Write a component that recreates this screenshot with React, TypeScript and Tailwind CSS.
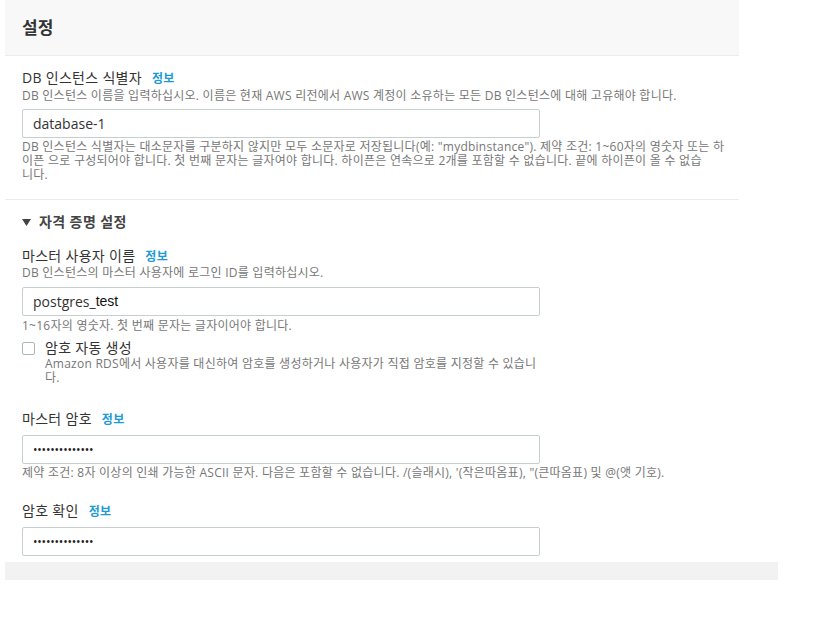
const font = "font-['Open_Sans','Noto_Sans_CJK_KR',sans-serif]";

function Info() {
  return <span className="ml-[10px] text-[12px] font-bold text-[#1c9ad6]">정보</span>;
}

function Field({ value, mono }: { value: React.ReactNode; mono?: boolean }) {
  return (
    <div
      className={`w-[518px] h-[29px] border border-[#c6cfd0] rounded-[2px] bg-white flex items-center px-[10px] ${
        mono ? "text-[12px] tracking-[-0.2px] text-[#222]" : "text-[14px] text-[#333]"
      }`}
    >
      {value}
    </div>
  );
}

const label = "flex items-baseline text-[14px] tracking-[0.3px] leading-[18px] text-[#333]";
const desc = "text-[12px] tracking-[0.25px] leading-[14px] text-[#777]";

export default function App() {
  const dots = "••••••••••••••";
  return (
    <div className={`w-[837px] h-[617px] bg-white ${font}`}>
      <div className="ml-[5px] w-[734px]">
        <div className="h-[56px] bg-[#f8f8f8] border-b border-[#eaeded] flex items-center pl-[17px]">
          <h2 className="text-[17px] font-bold text-[#333]">설정</h2>
        </div>

        <div className="px-[17px] pt-[13px] pb-[17px] border-b border-[#eaeded]">
          <div className={label}>
            DB 인스턴스 식별자 <Info />
          </div>
          <p className={`mt-[1px] ${desc}`}>
            DB 인스턴스 이름을 입력하십시오. 이름은 현재 AWS 리전에서 AWS 계정이 소유하는 모든 DB 인스턴스에 대해 고유해야 합니다.
          </p>
          <div className="mt-[6px]">
            <Field value="database-1" />
          </div>
          <div className={`mt-[2px] whitespace-nowrap ${desc}`}>
            <p>DB 인스턴스 식별자는 대소문자를 구분하지 않지만 모두 소문자로 저장됩니다(예: "mydbinstance"). 제약 조건: 1~60자의 영숫자 또는 하</p>
            <p>이픈 으로 구성되어야 합니다. 첫 번째 문자는 글자여야 합니다. 하이픈은 연속으로 2개를 포함할 수 없습니다. 끝에 하이픈이 올 수 없습</p>
            <p>니다.</p>
          </div>
        </div>

        <div className="px-[17px] pt-[12px]">
          <div className="flex items-center gap-[8px] text-[14px] tracking-[0.4px] leading-[20px] font-semibold text-[#444]">
            <svg width="9" height="7" viewBox="0 0 9 7">
              <path d="M0 0 H9 L4.5 7 Z" fill="#444" />
            </svg>
            자격 증명 설정
          </div>

          <div className={`mt-[15px] ${label}`}>
            마스터 사용자 이름 <Info />
          </div>
          <p className={desc}>DB 인스턴스의 마스터 사용자에 로그인 ID를 입력하십시오.</p>
          <div className="mt-[7px]">
            <Field
              value={
                <>
                  postgres_<span className="font-['Liberation_Sans',sans-serif] text-[#111]">test</span>
                </>
              }
            />
          </div>
          <p className={`mt-[3px] ${desc}`}>1~16자의 영숫자. 첫 번째 문자는 글자이어야 합니다.</p>

          <div className="mt-[6px] flex gap-[10px]">
            <div className="mt-[3px] w-[13px] h-[13px] border border-[#aab7b8] rounded-[2px] bg-white shrink-0" />
            <div>
              <div className="text-[14px] tracking-[0.3px] leading-[18px] text-[#333]">암호 자동 생성</div>
              <div className={`whitespace-nowrap ${desc} leading-[13px]`}>
                <p>Amazon RDS에서 사용자를 대신하여 암호를 생성하거나 사용자가 직접 암호를 지정할 수 있습니</p>
                <p>다.</p>
              </div>
            </div>
          </div>

          <div className={`mt-[25px] ${label}`}>
            마스터 암호 <Info />
          </div>
          <div className="mt-[6px]">
            <Field value={dots} mono />
          </div>
          <p className={`mt-[2px] ${desc}`}>
            제약 조건: 8자 이상의 인쇄 가능한 ASCII 문자. 다음은 포함할 수 없습니다. /(슬래시), '(작은따옴표), "(큰따옴표) 및 @(앳 기호).
          </p>

          <div className={`mt-[22px] ${label}`}>
            암호 확인 <Info />
          </div>
          <div className="mt-[6px]">
            <Field value={dots} mono />
          </div>
        </div>
      </div>
      <div className="ml-[5px] mt-[6px] w-[773px] h-[18px] bg-[#f2f2f2]" />
    </div>
  );
}
